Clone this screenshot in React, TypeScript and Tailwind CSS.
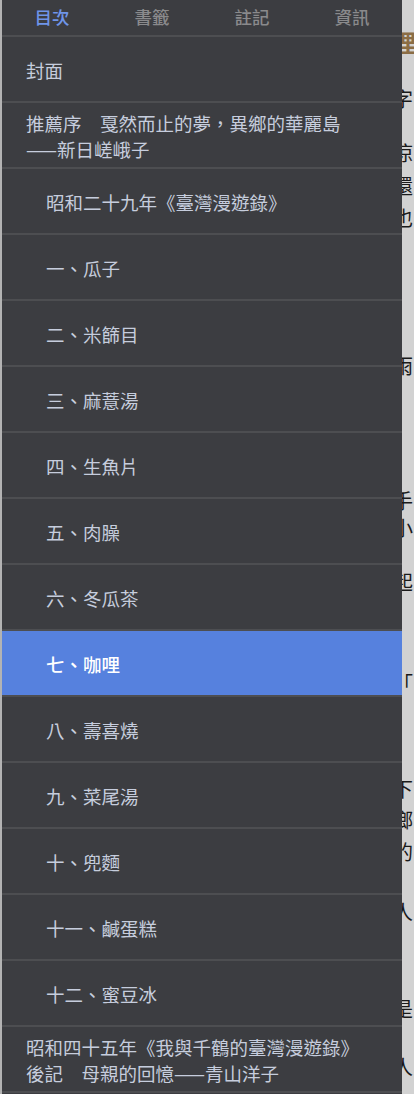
const tabs = ["目次", "書籤", "註記", "資訊"];

type Entry = { lines: string[]; indent?: boolean; active?: boolean };

const entries: Entry[] = [
  { lines: ["封面"] },
  { lines: ["推薦序　戛然而止的夢，異鄉的華麗島", "——新日嵯峨子"] },
  { lines: ["昭和二十九年《臺灣漫遊錄》"], indent: true },
  { lines: ["一、瓜子"], indent: true },
  { lines: ["二、米篩目"], indent: true },
  { lines: ["三、麻薏湯"], indent: true },
  { lines: ["四、生魚片"], indent: true },
  { lines: ["五、肉臊"], indent: true },
  { lines: ["六、冬瓜茶"], indent: true },
  { lines: ["七、咖哩"], indent: true, active: true },
  { lines: ["八、壽喜燒"], indent: true },
  { lines: ["九、菜尾湯"], indent: true },
  { lines: ["十、兜麵"], indent: true },
  { lines: ["十一、鹹蛋糕"], indent: true },
  { lines: ["十二、蜜豆冰"], indent: true },
  { lines: ["昭和四十五年《我與千鶴的臺灣漫遊錄》", "後記　母親的回憶——青山洋子"] },
];

const font = {
  fontFamily: '"Noto Sans CJK TC", "Noto Sans", sans-serif',
};

function Row({ entry }: { entry: Entry }) {
  return (
    <div className="border-t-2 border-[#4d4e51]">
      <div
        className={
          "flex min-h-[64px] items-center pt-[7px] pb-[5px] text-[18.5px] leading-[26px] " +
          (entry.indent ? "pl-[44px] " : "pl-[24px] ") +
          (entry.active ? "bg-[#5681de] text-white font-medium" : "text-[#c6cddd]")
        }
      >
        <div>
          {entry.lines.map((l) => (
            <div key={l}>{l}</div>
          ))}
        </div>
      </div>
    </div>
  );
}

function PageBehind() {
  // glimpses of the book page behind the drawer
  return (
    <div className="flex flex-1 flex-col overflow-hidden text-[20px] leading-[22px] text-[#1a1a1a]" style={{ fontFamily: '"Noto Sans CJK TC", serif' }}>
      <div className="-ml-[10px] mt-[30px] text-[24px] leading-[24px] font-bold text-[#8b6d45]">理</div>
      <div className="-ml-[9px] mt-[34px]">字</div>
      <div className="-ml-[9px] mt-[32px]">涼</div>
      <div className="-ml-[9px] mt-[11px]">還</div>
      <div className="-ml-[9px] mt-[10px]">也</div>
      <div className="-ml-[9px] mt-[126px]">雨</div>
      <div className="-ml-[9px] mt-[113px]">手</div>
      <div className="-ml-[9px] mt-[5px]">小</div>
      <div className="-ml-[9px] mt-[32px]">起</div>
      <div className="-ml-[9px] mt-[80px]">「</div>
      <div className="-ml-[9px] mt-[83px]">下</div>
      <div className="-ml-[9px] mt-[9px]">鄉</div>
      <div className="-ml-[9px] mt-[10px]">的</div>
      <div className="-ml-[9px] mt-[38px]">人</div>
      <div className="-ml-[9px] mt-[75px]">是</div>
      <div className="-ml-[9px] mt-[36px]">人</div>
    </div>
  );
}

export default function App() {
  return (
    <div className="flex h-[1094px] w-[414px] overflow-hidden bg-[#d2d2d2]" style={font}>
      <div className="w-[2px] shrink-0 bg-[#b3b3b3]" />
      <div className="flex w-[400px] shrink-0 flex-col bg-[#3c3d41]">
        <div className="grid h-[35px] grid-cols-4 items-center text-center text-[17.5px] font-medium">
          {tabs.map((t, i) => (
            <div key={t} className={i === 0 ? "text-[#6f95e9]" : "text-[#8a8a8c]"}>
              {t}
            </div>
          ))}
        </div>
        {entries.map((e, i) => (
          <Row key={i} entry={e} />
        ))}
        <div className="border-t-2 border-[#4d4e51]" />
      </div>
      <PageBehind />
    </div>
  );
}
